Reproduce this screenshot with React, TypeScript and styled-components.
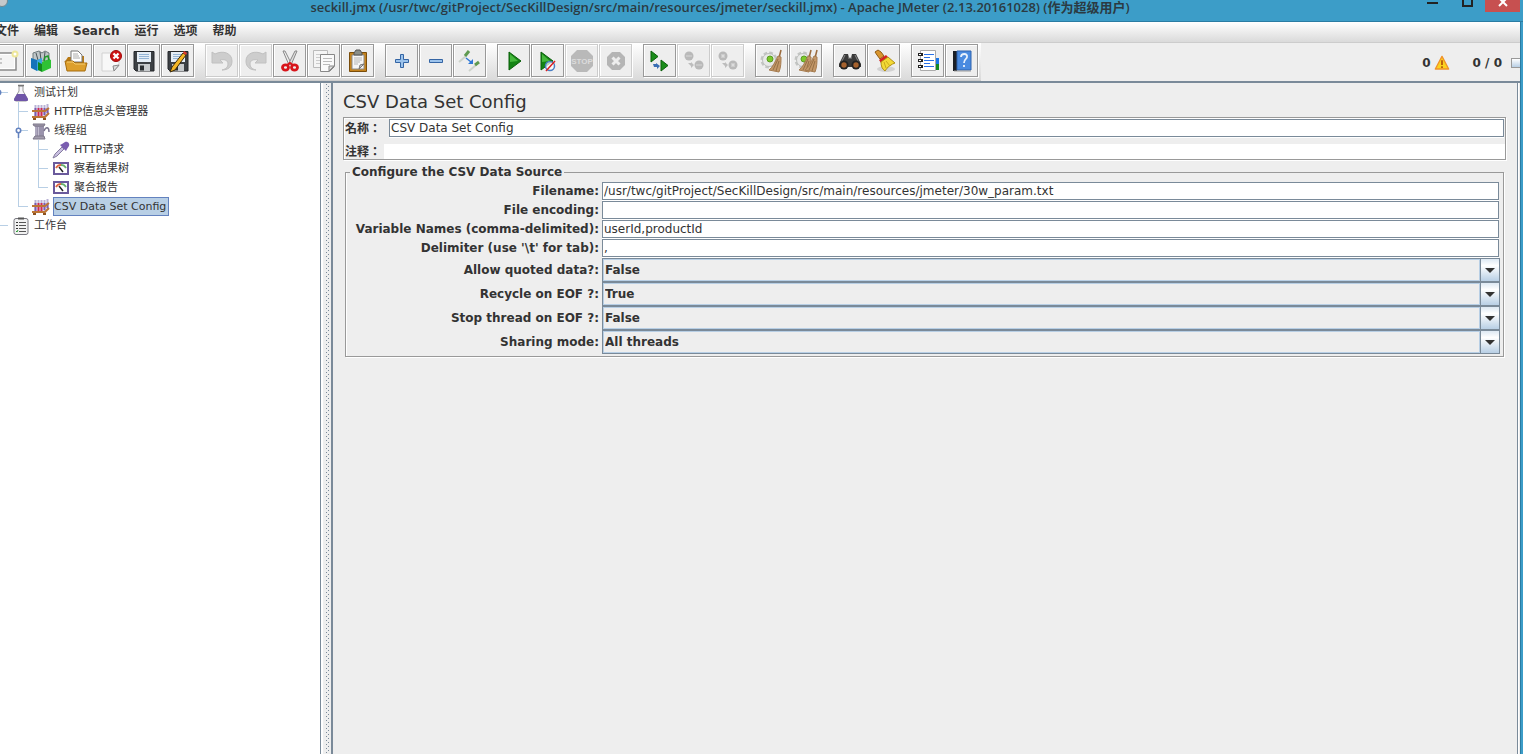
import React, { useState } from "react";
import styled, { createGlobalStyle, css } from "styled-components";

const SLATE = "#7a8a99";
const PALE = "#b8cfe5";
const SANS = `"DejaVu Sans", "Noto Sans CJK SC", sans-serif`;

const GlobalStyle = createGlobalStyle`
  * { box-sizing: border-box; }
  body { margin: 0; background: #eeeeee; color: #333333; font: 12px/16px ${SANS}; overflow: hidden; }
  button, input, select { font: inherit; color: inherit; margin: 0; }
`;

const Frame = styled.div`
  display: flex;
  flex-direction: column;
  height: 100vh;
  background: #3c9dc8;
`;

/* ---------- title bar ---------- */

const TitleBar = styled.header`
  display: flex;
  align-items: flex-start;
  height: 22px;
  padding-right: 3px;
  border-bottom: 1px solid #2a7ca3;
`;

const AppBadge = styled.div`
  width: 25px;
  height: 12px;
  svg { display: block; }
`;

const WindowTitle = styled.h1`
  flex: 1;
  margin: 0;
  text-align: center;
  white-space: nowrap;
  font: 600 13px/15px "Open Sans", "Noto Sans CJK SC", sans-serif;
  color: #2b3a42;
`;

const WindowButtons = styled.div`
  display: flex;
`;

const WindowButton = styled.button<{ $danger?: boolean }>`
  display: flex;
  justify-content: center;
  align-items: flex-start;
  width: 35px;
  height: 12px;
  padding: 0;
  border: 0;
  overflow: hidden;
  background: ${(p) => (p.$danger ? "#c75050" : "transparent")};
`;

/* ---------- menu and tool bar ---------- */

const Body = styled.div`
  flex: 1;
  min-height: 0;
  display: flex;
  flex-direction: column;
  margin-right: 2px;
  border-right: 1px solid #2a7ca3;
  background: #eeeeee;
`;

const MenuBar = styled.nav`
  display: flex;
  align-items: flex-start;
  gap: 15px;
  height: 21px;
  padding-top: 1px;
  border-bottom: 1px solid #cccccc;
  background: linear-gradient(#ffffff, #dadada);
`;

const MenuItem = styled.button`
  padding: 0;
  border: 0;
  background: none;
  font-weight: bold;
  line-height: 16px;
  white-space: nowrap;
  &:first-child { margin-left: -5px; }
`;

const ToolRow = styled.div`
  display: flex;
  justify-content: space-between;
  align-items: stretch;
  height: 38px;
`;

const ToolBar = styled.div`
  display: flex;
  gap: 11px;
  margin-left: -9px;
  padding: 1px 3px 3px 0;
  border-bottom: 1px solid #cccccc;
  background: linear-gradient(#ffffff, #dadada);
`;

const ToolGroup = styled.div`
  display: flex;
  gap: 1px;
`;

const ToolButton = styled.button`
  display: flex;
  align-items: center;
  justify-content: center;
  width: 33px;
  height: 33px;
  padding: 0;
  border: 1px solid #999999;
  background: #eeeeee;
  box-shadow: 1px 1px 0 #ffffff, inset 1px 1px 0 #ffffff;
  &:disabled { border-color: #cccccc; }
`;

const StatusArea = styled.div`
  display: flex;
  align-items: center;
  padding-top: 1px;
  font-weight: bold;
  overflow: hidden;
`;

const ErrorCount = styled.span`
  display: flex;
  align-items: center;
  gap: 3px;
  margin-right: 23px;
`;

const RunLight = styled.span`
  width: 9px;
  height: 10px;
  margin-left: 9px;
  border: 1px solid #999999;
  border-right: 0;
  background: linear-gradient(#ffffff, ${PALE});
`;

/* ---------- split panes ---------- */

const Panes = styled.div`
  flex: 1;
  min-height: 0;
  display: flex;
  border-top: 2px solid ${SLATE};
`;

const TreePane = styled.aside`
  width: 321px;
  flex: none;
  border-right: 1px solid ${SLATE};
  background: #ffffff;
  overflow: hidden;
`;

const Divider = styled.div`
  width: 10px;
  flex: none;
  padding: 1px 1px 0 3px;
  border-left: 2px solid #ffffff;
  &::before {
    content: "";
    display: block;
    width: 4px;
    height: 100%;
    background-image:
      conic-gradient(at 1px 1px, transparent 75%, ${SLATE} 0),
      conic-gradient(at 1px 1px, transparent 75%, ${SLATE} 0);
    background-size: 4px 4px;
    background-position: 0 0, 2px 2px;
  }
`;

const EditorPane = styled.main`
  flex: 1;
  min-width: 0;
  margin-right: 2px;
  padding: 9px 11px 0 10px;
  border-left: 2px solid ${SLATE};
  border-right: 1px solid ${SLATE};
  box-shadow: 1px 0 0 #ffffff;
`;

/* ---------- tree ---------- */

const TreeList = styled.ul`
  margin: 0 0 0 -2px;
  padding: 0;
  list-style: none;
`;

const TreeRow = styled.li`
  display: flex;
  align-items: center;
  height: 19px;
`;

type GuideKind = "line" | "tee" | "last";

const Guide = styled.span<{ $kind: GuideKind }>`
  width: ${(p) => (p.$kind === "line" ? 20 : 10)}px;
  height: 19px;
  flex: none;
  background-repeat: no-repeat;
  ${(p) =>
    p.$kind === "line"
      ? css`
          background-image: linear-gradient(${PALE}, ${PALE});
          background-size: 1px 100%;
        `
      : css`
          background-image: linear-gradient(${PALE}, ${PALE}), linear-gradient(${PALE}, ${PALE});
          background-size: 1px ${p.$kind === "tee" ? "100%" : "10px"}, 100% 1px;
          background-position: 0 0, 0 9px;
        `}
`;

const Handle = styled.svg`
  display: block;
  margin: 6px 0 0 -4px;
`;

const TreeIcon = styled.span`
  width: 25px;
  flex: none;
  display: flex;
  justify-content: center;
`;

const TreeLabel = styled.button<{ $selected?: boolean }>`
  height: 19px;
  padding: 0 2px 0 0;
  border: 1px solid ${(p) => (p.$selected ? "#6382bf" : "transparent")};
  background: ${(p) => (p.$selected ? PALE : "transparent")};
  font-size: 11px;
  line-height: 16px;
  white-space: nowrap;
`;

/* ---------- editor form ---------- */

const Heading = styled.h2`
  margin: 0 0 5px;
  font-size: 18px;
  line-height: 20px;
  font-weight: normal;
`;

const NamePanel = styled.div`
  padding-top: 1px;
  border: 1px solid #999999;
  box-shadow: 1px 1px 0 #ffffff, inset 1px 1px 0 #ffffff;
`;

const BoldLabel = styled.label`
  font-weight: bold;
  white-space: nowrap;
`;

const NameRow = styled.div<{ $gap: number }>`
  display: flex;
  align-items: center;
  gap: ${(p) => p.$gap}px;
  padding: 0 1px;
  & + & { margin-top: 6px; padding-right: 0; }
  ${BoldLabel} { font-family: "Noto Sans CJK TC", sans-serif; }
`;

const TextField = styled.input`
  flex: 1;
  min-width: 0;
  width: 100%;
  height: 18px;
  padding: 0 0 0 1px;
  border: 1px solid ${SLATE};
  border-radius: 0;
  background: #ffffff;
  box-shadow: 0 1px 0 #ffffff;
  outline: 0;
`;

const PlainField = styled(TextField)`
  height: 15px;
  border: 0;
  box-shadow: none;
`;

const SourceGroup = styled.fieldset`
  min-width: 0;
  margin: 4px 2px 0;
  padding: 2px 3px 2px 1px;
  border: 1px solid #999999;
  box-shadow: 1px 1px 0 #ffffff, inset 1px 0 0 #ffffff;
`;

const GroupTitle = styled.legend`
  margin-left: 3px;
  padding: 0 2px;
  font-weight: bold;
  line-height: 16px;
`;

const FormRow = styled.div<{ $tall?: boolean }>`
  display: grid;
  grid-template-columns: 252px 1fr;
  column-gap: 3px;
  height: ${(p) => (p.$tall ? 24 : 19)}px;
  padding-right: ${(p) => (p.$tall ? 0 : 1)}px;
  ${BoldLabel} {
    text-align: right;
    line-height: ${(p) => (p.$tall ? 24 : 19)}px;
  }
`;

const ComboWrap = styled.div`
  position: relative;
`;

const Combo = styled.select`
  display: block;
  width: 100%;
  height: 24px;
  padding: 0 24px 0 2px;
  border: 1px solid ${SLATE};
  border-radius: 0;
  appearance: none;
  background: #eeeeee;
  box-shadow: inset 1px 1px 0 ${PALE}, inset 0 -1px 0 ${PALE};
  font-weight: bold;
  outline: 0;
`;

const ComboArrow = styled.span`
  position: absolute;
  top: 1px;
  right: 1px;
  bottom: 1px;
  width: 19px;
  display: flex;
  align-items: center;
  justify-content: center;
  border-left: 1px solid ${SLATE};
  background: linear-gradient(#dde8f3, #ffffff 30%, ${PALE});
  box-shadow: -1px 0 0 ${PALE};
  pointer-events: none;
`;

/* ---------- toolbar drawings ---------- */

const Glyph = ({ children, size = 24 }: { children: React.ReactNode; size?: number }) => (
  <svg width={size} height={size} viewBox="0 0 24 24" fill="none" aria-hidden="true">
    {children}
  </svg>
);

const NewIcon = () => (
  <Glyph>
    <path d="M1 4h19v17H1z" fill="#fff" stroke="#8a8a8a" strokeWidth="1.5" />
    <path d="M3 6h15v13H3z" fill="#f4f4f4" />
    <path d="M3 10h3M3 14h3" stroke="#999" />
    <circle cx="19" cy="5" r="2.5" fill="#fff" stroke="#eee79a" strokeWidth="2" />
  </Glyph>
);

const TemplatesIcon = () => (
  <Glyph>
    <path d="M3 4l6-2 3 2 3-2 4 2v8H3z" fill="#bfc6c8" stroke="#6f7a7d" />
    <path d="M6 4l2 7M10 3l1 8M15 3l-1 8" stroke="#4a5558" />
    <path d="M1 9l6 2v11l-6-3z" fill="#1673b8" />
    <path d="M7 11l5-2v11l-5 2z" fill="#39a5e0" />
    <path d="M8 13l4 2v8l-4-2z" fill="#118a1d" />
    <path d="M12 13l7-3 2 1v8l-9 4z" fill="#2fc235" />
    <path d="M14 12l1-4 3-1 1 4" stroke="#1d9b26" strokeWidth="1.5" />
  </Glyph>
);

const OpenIcon = () => (
  <Glyph>
    <path d="M2 11l2-3h3v-1h13v14H3z" fill="#b97a14" />
    <path d="M7 13V2h7l4 4v7z" fill="#fff" stroke="#777" />
    <path d="M9 5h5M9 7h6M9 9h7" stroke="#aaa" />
    <path d="M1 12h8l2 2h12l-2 8H3z" fill="#dd9f2c" stroke="#a66d0e" />
    <path d="M3 13h6l2 2h10" stroke="#f7cf73" />
  </Glyph>
);

const CloseIcon = () => (
  <Glyph>
    <path d="M4 4h17v13l-5 5H4z" fill="#f8f8f8" stroke="#d2d2d2" />
    <path d="M21 16l-6 1 1 5z" fill="#ddd" stroke="#888" />
    <circle cx="18" cy="7" r="5.5" fill="#cf1414" stroke="#a00808" />
    <path d="M15.500 4.500l5 5M20.500 4.500l-5 5" stroke="#fff" strokeWidth="2.200" />
  </Glyph>
);

const Floppy = () => (
  <>
    <path d="M2 2.500h20v19.500H4l-2-2z" fill="#3c4044" stroke="#24272a" />
    <path d="M5 3h14v10H5z" fill="#e6eef6" />
    <path d="M7 5.500h10M7 7.500h10M7 9.500h10" stroke="#95b5d6" />
    <path d="M6 15h12v7H6z" fill="#c8cbcd" />
    <path d="M8 16.500h4v5H8z" fill="#2b2e31" />
  </>
);

const SaveIcon = () => <Glyph><Floppy /></Glyph>;

const SaveAsIcon = () => (
  <Glyph>
    <Floppy />
    <path d="M17 4l3 2L9 21l-5 2 2-5z" fill="#f5b625" stroke="#3b2a0a" />
    <path d="M17 4l1-2 3 2-1 2z" fill="#e03a2c" />
  </Glyph>
);

const UndoPath = () => (
  <path
    d="M2 3l3 2c8-4 17-1 17 7 0 6-4 9-10 9 4-1 6-3 6-6 0-4-4-5-8-4l3 3H2z"
    fill="#cdcdcd"
    stroke="#c0c0c0"
  />
);
const UndoIcon = () => <Glyph><UndoPath /></Glyph>;
const RedoIcon = () => <Glyph><g transform="matrix(-1 0 0 1 24 0)"><UndoPath /></g></Glyph>;

const CutIcon = () => (
  <Glyph>
    <path d="M5 2l2 0 6 12-2 2z" fill="#f0f0f0" stroke="#888" />
    <path d="M19 2l-2 0-6 12 2 2z" fill="#e0e0e0" stroke="#888" />
    <ellipse cx="7.500" cy="18.500" rx="3" ry="2.600" stroke="#d8151b" strokeWidth="2.800" />
    <ellipse cx="16.500" cy="18.500" rx="3" ry="2.600" stroke="#d8151b" strokeWidth="2.800" />
    <path d="M9 16l3-2 3 2" stroke="#d8151b" strokeWidth="2" />
  </Glyph>
);

const CopyIcon = () => (
  <Glyph>
    <path d="M1.500 1.500h14v17h-14z" fill="#f5f5f5" stroke="#bbb" />
    <path d="M4 5.500h9M4 8.500h5M4 11.500h4M4 14.500h4" stroke="#ccc" />
    <path d="M8.500 5.500h14v12l-5 5h-9z" fill="#fafafa" stroke="#888" />
    <path d="M11 9.500h9M11 12.500h9M11 15.500h7" stroke="#bbb" />
    <path d="M22 17h-5v5z" fill="#ddd" stroke="#888" />
  </Glyph>
);

const PasteIcon = () => (
  <Glyph>
    <path d="M3.500 3.500h17v19h-17z" fill="#c4821c" stroke="#7a4d0b" />
    <path d="M6 6h12v14H6z" fill="#f6f6f6" stroke="#8d8d8d" />
    <path d="M8 4l2-3h4l2 3v2H8z" fill="#8a8e88" stroke="#555" />
    <path d="M8 9h8M8 11h8M8 13h6M8 15h4" stroke="#b5b5b5" />
    <path d="M18 15l-4 1-1 4z" fill="#ccc" stroke="#777" />
  </Glyph>
);

const PlusIcon = () => (
  <Glyph>
    <path d="M10.500 5.500h3v5h5v3h-5v5h-3v-5h-5v-3h5z" fill="#9cc3ec" stroke="#3465a4" />
  </Glyph>
);
const MinusIcon = () => (
  <Glyph>
    <path d="M5.500 10.500h13v3h-13z" fill="#9cc3ec" stroke="#3465a4" />
  </Glyph>
);

const ToggleIcon = () => (
  <Glyph>
    <path d="M1 13l7-6" stroke="#cdd3cb" strokeWidth="2" />
    <path d="M7 7l4-5" stroke="#5f9a50" strokeWidth="3" />
    <path d="M11 22l7-6" stroke="#cdd3cb" strokeWidth="2" />
    <path d="M17 16l4-3" stroke="#5f9a50" strokeWidth="3" />
    <path d="M8 9l5 4" stroke="#2f78d6" strokeWidth="1.500" />
    <path d="M15 10v5h-5z" fill="#2f78d6" />
  </Glyph>
);

const PlayIcon = () => (
  <Glyph>
    <path d="M7 3l12 9-12 9z" fill="#148414" stroke="#0b5f0b" />
    <path d="M8 5l8 7-8 1z" fill="#46b83c" />
  </Glyph>
);

const PlayNoPauseIcon = () => (
  <Glyph>
    <path d="M5 3l12 9-12 9z" fill="#148414" stroke="#0b5f0b" />
    <path d="M6 5l8 7-8 1z" fill="#46b83c" />
    <circle cx="14" cy="17" r="4.500" fill="#fff" fillOpacity=".7" stroke="#4a7fc4" strokeWidth="1.500" />
    <path d="M10 22l9-10" stroke="#dd2222" strokeWidth="1.500" />
  </Glyph>
);

const StopIcon = () => (
  <Glyph>
    <path d="M7 1h10l6 6v10l-6 6H7l-6-6V7z" fill="#b9b9b9" />
    <text x="12" y="15" textAnchor="middle" fontSize="8" fontWeight="bold" fontFamily="Liberation Sans, sans-serif" fill="#dcdcdc">STOP</text>
  </Glyph>
);

const ShutdownIcon = () => (
  <Glyph>
    <path d="M8 3h8l5 5v8l-5 5H8l-5-5V8z" fill="#b5b5b5" />
    <path d="M8.500 8.500l7 7M15.500 8.500l-7 7" stroke="#eeeeee" strokeWidth="3" />
  </Glyph>
);

const RemotePlayIcon = () => (
  <Glyph>
    <path d="M3 2l7 5.500L3 13z" fill="#1a8c1a" stroke="#0b5f0b" />
    <path d="M13 11l7 5.500-7 5.500z" fill="#1a8c1a" stroke="#0b5f0b" />
    <path d="M5 15h3v-1l4 3-3 3v-2H6z" fill="#3a6eb4" />
  </Glyph>
);

const RemoteStopIcon = ({ cross }: { cross?: boolean }) => (
  <Glyph>
    <circle cx="7" cy="7" r="4.500" fill="#b9b9b9" />
    <circle cx="17" cy="16" r="4.500" fill="#b9b9b9" />
    <path d="M6 14h3v-1l3 3-3 3v-2z" fill="#bdbdbd" />
    {cross ? (
      <path d="M5.500 5.500l3 3M8.500 5.500l-3 3M15.500 14.500l3 3M18.500 14.500l-3 3" stroke="#ddd" strokeWidth="1.500" />
    ) : (
      <path d="M4 7h6M14 16h6" stroke="#c8c8c8" strokeWidth="2" />
    )}
  </Glyph>
);

const Gear = () => (
  <>
    <circle cx="9" cy="11" r="7" stroke="#c3c5c3" strokeWidth="3" strokeDasharray="3.500 2" />
    <circle cx="9" cy="11" r="6.500" fill="#e8e9e8" stroke="#bcbebc" />
    <circle cx="10" cy="10" r="3" fill="#7cc92c" stroke="#5a9c20" />
  </>
);

const Broom = ({ x = 0 }: { x?: number }) => (
  <g transform={`translate(${x} 0)`}>
    <path d="M19 9l2-8" stroke="#9b6b3d" strokeWidth="1.600" />
    <path d="M18 7l3 1c0 5 0 10-2 15l-10-2c4-3 6-8 9-14z" fill="#c39768" stroke="#a67c50" />
    <path d="M18 10l-5 11M19 12l-3 10" stroke="#957046" />
  </g>
);

const ClearIcon = () => <Glyph><Gear /><Broom /></Glyph>;
const ClearAllIcon = () => <Glyph><Gear /><Broom x={-4} /><Broom x={2} /></Glyph>;

const SearchIcon = () => (
  <Glyph>
    <path d="M6 5h4l1 4h2l1-4h4l5 10v3H1v-3z" fill="#3a3a3a" />
    <path d="M7 6l-4 8M17 6l4 8M10 9h4" stroke="#8a8a8a" />
    <circle cx="6" cy="16" r="4.500" fill="#222" />
    <circle cx="18" cy="16" r="4.500" fill="#222" />
    <circle cx="6" cy="16" r="2.700" fill="#a6622e" />
    <circle cx="18" cy="16" r="2.700" fill="#a6622e" />
  </Glyph>
);

const ResetSearchIcon = () => (
  <Glyph>
    <ellipse cx="14" cy="20" rx="9" ry="3" fill="#d2d2d2" />
    <path d="M3 3l3-2 3 2 3 4-4 3-3-4z" fill="#d9962e" stroke="#8f5a10" />
    <path d="M7 11l7-5 2 2-7 6z" fill="#d62020" />
    <path d="M9 13l7-5 7 6c-3 1-8 4-10 8-3-2-4-5-4-9z" fill="#f3d935" stroke="#b08f12" />
    <path d="M12 13l2 6M14 12l4 5" stroke="#c9aa1c" />
  </Glyph>
);

const FunctionIcon = () => (
  <Glyph>
    <path d="M18 9h5v6h-5z" fill="#1976e8" />
    <path d="M18 15h5v6h-5z" fill="#138a21" />
    <path d="M4.500 1.500h15v20h-15z" fill="#fff" stroke="#aaa" />
    <path d="M8 5.500h10M8 8.500h6M8 11.500h10M8 14.500h6M8 17.500h10" stroke="#2a72e8" />
    <path d="M2 5.500h5M2 11.500h5M2 17.500h5" stroke="#222" strokeWidth="3" />
    <path d="M3 5.500h2M3 11.500h2M3 17.500h2" stroke="#fff" />
  </Glyph>
);

const HelpIcon = () => (
  <Glyph>
    <path d="M3 2h4v20H3z" fill="#1b1f26" />
    <path d="M7 2h14v19H7z" fill="#4a8be0" stroke="#2f62ad" />
    <path d="M4 22h17" stroke="#999" />
    <path d="M11 8c0-4 7-4 6 0 0 2-3 2-3 6M14 16v2" stroke="#e8f1fc" strokeWidth="1.800" />
  </Glyph>
);

const WarningIcon = () => (
  <Glyph size={16}>
    <path d="M12 2L22 21H2z" fill="#fbd31e" stroke="#f0922a" strokeWidth="2" strokeLinejoin="round" />
    <path d="M12 8v7M12 17v2.500" stroke="#b3540c" strokeWidth="2.600" />
  </Glyph>
);

/* ---------- tree drawings ---------- */

const FlaskIcon = () => (
  <svg width="16" height="18" viewBox="0 0 16 18" aria-hidden="true">
    <path d="M6 2h4v5l4 7c1 2 0 3-1 3H3c-1 0-2-1-1-3l4-7z" fill="#f4f4f8" stroke="#999" />
    <path d="M4 10h8l3 5c0 1 0 2-1 2H2c-1 0-1-1-1-2z" fill="#6f55a8" />
    <path d="M5 1.500h6" stroke="#777" strokeWidth="1.500" />
  </svg>
);

const RackIcon = () => (
  <svg width="20" height="17" viewBox="0 0 20 17" fill="none" aria-hidden="true">
    <path d="M4.500 2v11M7.500 2v11M10.500 2v11M13.500 2v11M16.500 1v11" stroke="#b9b2d6" strokeWidth="2" />
    <path d="M7.500 5v8M10.500 5v8" stroke="#d02852" strokeWidth="2" />
    <path d="M4.500 5v8M13.500 5v7M16.500 5v5" stroke="#7a5db0" strokeWidth="2" />
    <path d="M1 8h13l4-3M1 14h13l4-4" stroke="#bd7535" strokeWidth="2" />
    <path d="M2 16h3M12 16h3" stroke="#8c5320" strokeWidth="2" />
  </svg>
);

const SpoolIcon = () => (
  <svg width="18" height="18" viewBox="0 0 18 18" fill="none" aria-hidden="true">
    <path d="M3 4h9v11H3z" fill="#9a93ac" />
    <path d="M4 5v10M6.500 5v10" stroke="#c3bed0" />
    <path d="M1 2h12l-1 2H2zM3 14h9l1 3H1z" fill="#a39dae" stroke="#7c7688" />
    <path d="M12 9c2-5 5-4 5 1" stroke="#7c7690" strokeWidth="1.500" />
  </svg>
);

const DropperIcon = () => (
  <svg width="18" height="18" viewBox="0 0 18 18" fill="none" aria-hidden="true">
    <path d="M1 17l2-4 7-7 2 2-7 7z" fill="#c9c0e0" stroke="#857ca0" />
    <path d="M8 4l6 6 1-2 2-3c1-2-1-5-4-4l-3 2z" fill="#7a5db0" />
  </svg>
);

const GaugeIcon = () => (
  <svg width="16" height="13" viewBox="0 0 16 13" fill="none" aria-hidden="true">
    <path d="M1 1h14v11H1z" fill="#fff" stroke="#6a5a9c" strokeWidth="2" />
    <path d="M3 6c2-3 3-3 5-3" stroke="#e0643e" strokeWidth="2" />
    <path d="M8 3c2 0 3 0 5 3" stroke="#67b06b" strokeWidth="2" />
    <path d="M6 5l4 5" stroke="#222" strokeWidth="1.500" />
  </svg>
);

const ClipboardIcon = () => (
  <svg width="16" height="18" viewBox="0 0 16 18" fill="none" aria-hidden="true">
    <rect x="1" y="1.500" width="14" height="16" rx="2" fill="#f2f2f2" stroke="#77777f" />
    <path d="M5 1.500h6" stroke="#555" strokeWidth="2" />
    <path d="M6 5.500h7M6 8.500h7M6 11.500h7M6 14.500h7" stroke="#555" />
    <path d="M3 5.500h2M3 8.500h2M3 11.500h2" stroke="#333" />
    <path d="M3 14l1 1 1-2" stroke="#2a9a35" />
  </svg>
);

/* ---------- data ---------- */

type Tool = { name: string; icon: React.ReactNode; disabled?: boolean };

const toolGroups: Tool[][] = [
  [
    { name: "新建", icon: <NewIcon /> },
    { name: "模板", icon: <TemplatesIcon /> },
    { name: "打开", icon: <OpenIcon /> },
    { name: "关闭", icon: <CloseIcon /> },
    { name: "保存", icon: <SaveIcon /> },
    { name: "另存为", icon: <SaveAsIcon /> },
  ],
  [
    { name: "撤销", icon: <UndoIcon />, disabled: true },
    { name: "重做", icon: <RedoIcon />, disabled: true },
    { name: "剪切", icon: <CutIcon /> },
    { name: "复制", icon: <CopyIcon /> },
    { name: "粘贴", icon: <PasteIcon /> },
  ],
  [
    { name: "展开", icon: <PlusIcon /> },
    { name: "收起", icon: <MinusIcon /> },
    { name: "切换", icon: <ToggleIcon /> },
  ],
  [
    { name: "启动", icon: <PlayIcon /> },
    { name: "不停顿开始", icon: <PlayNoPauseIcon /> },
    { name: "停止", icon: <StopIcon />, disabled: true },
    { name: "关闭线程", icon: <ShutdownIcon />, disabled: true },
  ],
  [
    { name: "远程启动", icon: <RemotePlayIcon /> },
    { name: "远程停止", icon: <RemoteStopIcon />, disabled: true },
    { name: "远程关闭", icon: <RemoteStopIcon cross />, disabled: true },
  ],
  [
    { name: "清除", icon: <ClearIcon /> },
    { name: "清除全部", icon: <ClearAllIcon /> },
  ],
  [
    { name: "搜索", icon: <SearchIcon /> },
    { name: "重置搜索", icon: <ResetSearchIcon /> },
  ],
  [
    { name: "函数助手", icon: <FunctionIcon /> },
    { name: "帮助", icon: <HelpIcon /> },
  ],
];

type Node = { label: string; icon: React.ReactNode; guides: GuideKind[]; open?: boolean };

const nodes: Node[] = [
  { label: "测试计划", icon: <FlaskIcon />, guides: ["tee"], open: true },
  { label: "HTTP信息头管理器", icon: <RackIcon />, guides: ["line", "tee"] },
  { label: "线程组", icon: <SpoolIcon />, guides: ["line", "tee"], open: true },
  { label: "HTTP请求", icon: <DropperIcon />, guides: ["line", "line", "tee"] },
  { label: "察看结果树", icon: <GaugeIcon />, guides: ["line", "line", "tee"] },
  { label: "聚合报告", icon: <GaugeIcon />, guides: ["line", "line", "last"] },
  { label: "CSV Data Set Config", icon: <RackIcon />, guides: ["line", "last"] },
  { label: "工作台", icon: <ClipboardIcon />, guides: ["last"] },
];

const textRows = [
  { id: "filename", label: "Filename:", value: "/usr/twc/gitProject/SecKillDesign/src/main/resources/jmeter/30w_param.txt" },
  { id: "encoding", label: "File encoding:", value: "" },
  { id: "variables", label: "Variable Names (comma-delimited):", value: "userId,productId" },
  { id: "delimiter", label: "Delimiter (use '\\t' for tab):", value: "," },
];

const comboRows = [
  { id: "quoted", label: "Allow quoted data?:", value: "False", options: ["False", "True"] },
  { id: "recycle", label: "Recycle on EOF ?:", value: "True", options: ["True", "False"] },
  { id: "stop", label: "Stop thread on EOF ?:", value: "False", options: ["False", "True"] },
  { id: "sharing", label: "Sharing mode:", value: "All threads", options: ["All threads", "Current thread group", "Current thread"] },
];

export default function App() {
  const [selected, setSelected] = useState("CSV Data Set Config");

  return (
    <Frame>
      <GlobalStyle />
      <TitleBar>
        <AppBadge>
          <svg width="9" height="8" viewBox="0 0 9 8" aria-hidden="true">
            <circle cx="2" cy="1" r="5.500" fill="#c5c9cb" stroke="#6d8791" />
          </svg>
        </AppBadge>
        <WindowTitle>
          seckill.jmx (/usr/twc/gitProject/SecKillDesign/src/main/resources/jmeter/seckill.jmx) - Apache JMeter (2.13.20161028) (作为超级用户)
        </WindowTitle>
        <WindowButtons>
          <WindowButton aria-label="最小化">
            <svg width="11" height="12"><path d="M0 3h11" stroke="#222" strokeWidth="2" /></svg>
          </WindowButton>
          <WindowButton aria-label="最大化">
            <svg width="11" height="12"><path d="M1-3h9v9H1z" fill="none" stroke="#222" strokeWidth="2" /></svg>
          </WindowButton>
          <WindowButton aria-label="关闭窗口" $danger>
            <svg width="10" height="8"><path d="M1-2l8 8M9-2L1 6" stroke="#fff" strokeWidth="2" /></svg>
          </WindowButton>
        </WindowButtons>
      </TitleBar>

      <Body>
        <MenuBar>
          {["文件", "编辑", "Search", "运行", "选项", "帮助"].map((m) => (
            <MenuItem key={m}>{m}</MenuItem>
          ))}
        </MenuBar>
        <ToolRow>
          <ToolBar>
            {toolGroups.map((group, i) => (
              <ToolGroup key={i}>
                {group.map((t) => (
                  <ToolButton key={t.name} aria-label={t.name} disabled={t.disabled}>
                    {t.icon}
                  </ToolButton>
                ))}
              </ToolGroup>
            ))}
          </ToolBar>
          <StatusArea>
            <ErrorCount>
              0 <WarningIcon />
            </ErrorCount>
            <span>0 / 0</span>
            <RunLight />
          </StatusArea>
        </ToolRow>

        <Panes>
          <TreePane>
            <TreeList>
              {nodes.map((n) => (
                <TreeRow key={n.label}>
                  {n.guides.map((g, i) => (
                    <Guide key={i} $kind={g}>
                      {n.open && i === n.guides.length - 1 && (
                        <Handle width="9" height="12" viewBox="0 0 9 12" aria-hidden="true">
                          <path d="M4.500 6v5" stroke="#6382bf" strokeWidth="1.500" />
                          <circle cx="4.500" cy="3.500" r="2.200" fill="#fff" stroke="#6382bf" strokeWidth="1.600" />
                        </Handle>
                      )}
                    </Guide>
                  ))}
                  <TreeIcon>{n.icon}</TreeIcon>
                  <TreeLabel $selected={n.label === selected} onClick={() => setSelected(n.label)}>
                    {n.label}
                  </TreeLabel>
                </TreeRow>
              ))}
            </TreeList>
          </TreePane>
          <Divider />
          <EditorPane>
            <Heading>CSV Data Set Config</Heading>
            <NamePanel>
              <NameRow $gap={8}>
                <BoldLabel htmlFor="name">名称：</BoldLabel>
                <TextField id="name" defaultValue="CSV Data Set Config" />
              </NameRow>
              <NameRow $gap={3}>
                <BoldLabel htmlFor="comments">注释：</BoldLabel>
                <PlainField id="comments" defaultValue="" />
              </NameRow>
            </NamePanel>
            <SourceGroup>
              <GroupTitle>Configure the CSV Data Source</GroupTitle>
              {textRows.map((r) => (
                <FormRow key={r.id}>
                  <BoldLabel htmlFor={r.id}>{r.label}</BoldLabel>
                  <TextField id={r.id} defaultValue={r.value} />
                </FormRow>
              ))}
              {comboRows.map((r) => (
                <FormRow key={r.id} $tall>
                  <BoldLabel htmlFor={r.id}>{r.label}</BoldLabel>
                  <ComboWrap>
                    <Combo id={r.id} defaultValue={r.value}>
                      {r.options.map((o) => (
                        <option key={o}>{o}</option>
                      ))}
                    </Combo>
                    <ComboArrow>
                      <svg width="10" height="5" aria-hidden="true"><path d="M0 0h10L5 5z" fill="#333" /></svg>
                    </ComboArrow>
                  </ComboWrap>
                </FormRow>
              ))}
            </SourceGroup>
          </EditorPane>
        </Panes>
      </Body>
    </Frame>
  );
}
